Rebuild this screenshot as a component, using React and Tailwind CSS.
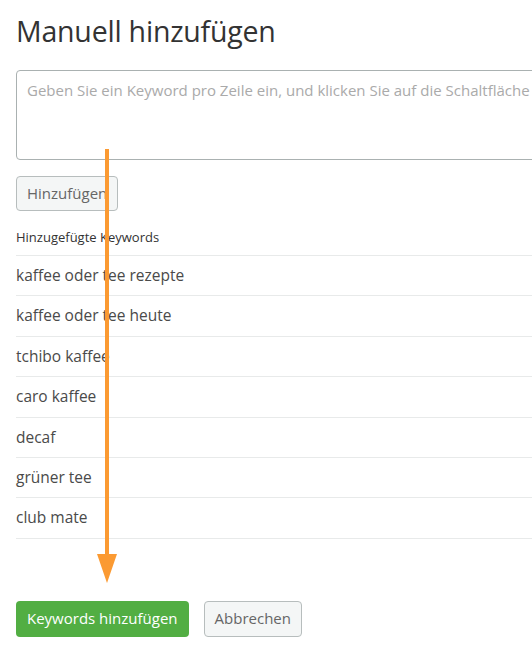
import React from "react";

const KEYWORDS = [
  "kaffee oder tee rezepte",
  "kaffee oder tee heute",
  "tchibo kaffee",
  "caro kaffee",
  "decaf",
  "grüner tee",
  "club mate",
];

const FONT = { fontFamily: '"Open Sans", "Noto Sans", sans-serif' };

export default function App() {
  return (
    <div className="relative w-full h-[647px] overflow-hidden bg-white" style={FONT}>
      <div className="w-[760px] pl-4">
        <h1 className="pt-[13px] text-[28.5px] leading-[37px] font-medium text-[#333] tracking-[-0.2px]">
          Manuell hinzufügen
        </h1>

        <textarea
          className="mt-[20px] block w-full h-[90px] rounded-[4px] border border-[#aab1b1] px-[10px] py-[8px] text-[15px] text-[#444] placeholder:text-[#aaa] resize-none outline-none"
          placeholder="Geben Sie ein Keyword pro Zeile ein, und klicken Sie auf die Schaltfläche Hinzufügen"
        />

        <button className="mt-[16px] h-[35px] px-[10px] rounded-[4px] border border-[#b7bdbd] bg-[#f4f6f6] text-[15px] text-[#666]">
          Hinzufügen
        </button>

        <p className="mt-[17px] pb-[9px] text-[13px] leading-[18px] text-[#333]">Hinzugefügte Keywords</p>

        <ul className="border-t border-[#e8eaea]">
          {KEYWORDS.map((k) => (
            <li key={k} className="h-[40.4px] flex items-center border-b border-[#e8eaea] text-[15.5px] text-[#4a4a4a]">
              {k}
            </li>
          ))}
        </ul>

        <div className="mt-[62px] flex gap-[15px]">
          <button className="h-[36px] px-[11px] rounded-[4px] bg-[#52ae43] text-[15px] font-medium text-white">
            Keywords hinzufügen
          </button>
          <button className="h-[36px] px-[10px] rounded-[4px] border border-[#b7bdbd] bg-[#f4f6f6] text-[15px] text-[#666]">
            Abbrechen
          </button>
        </div>
      </div>

      {/* annotation arrow */}
      <svg className="absolute left-0 top-0 pointer-events-none" width="532" height="647">
        <rect x="105" y="149" width="4" height="406" fill="#fb9a32" />
        <polygon points="97,554 117,554 107,583" fill="#fb9a32" />
      </svg>
    </div>
  );
}
